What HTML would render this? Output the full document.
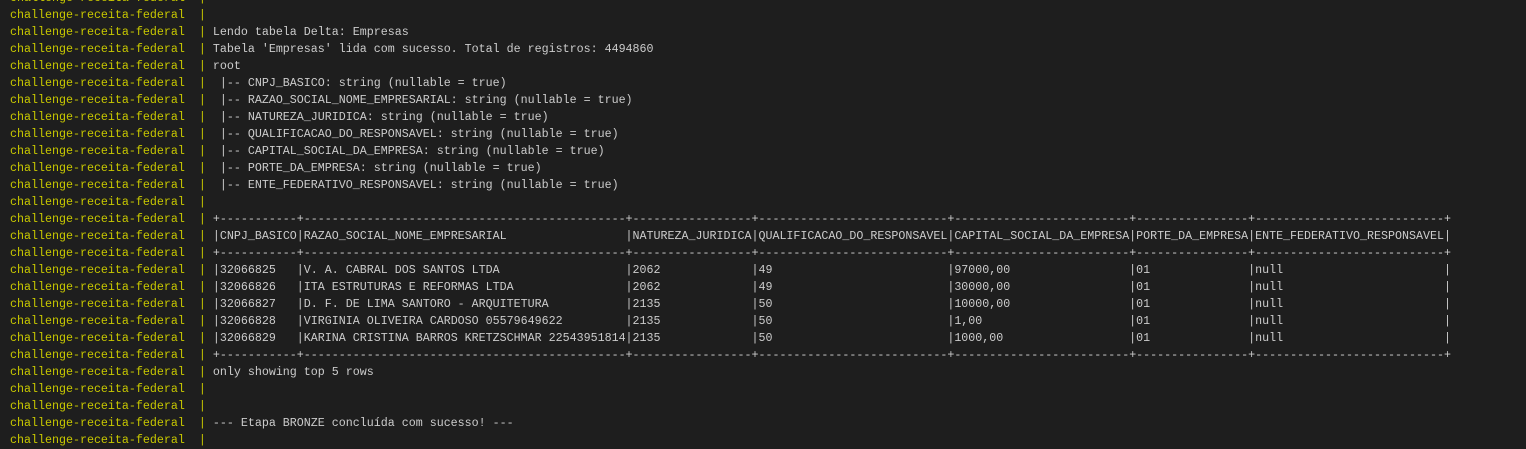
<!DOCTYPE html>
<html><head><meta charset="utf-8"><style>
html,body{margin:0;padding:0;background:#1e1e1e;width:1526px;height:442px;overflow:hidden}
.t{position:absolute;left:10px;top:-10px;font-family:"Liberation Mono",monospace;font-size:11.67px;line-height:17px;color:#cccccc}
.l{height:17px;white-space:pre}
.p{color:#c8c800}
.c{display:inline-block;width:11ch}.r{display:inline-block;width:46ch}.n{display:inline-block;width:17ch}.q{display:inline-block;width:27ch}.k{display:inline-block;width:25ch}.o{display:inline-block;width:16ch}
</style></head><body><div class="t">
<div class="l"><span class="p">challenge-receita-federal  | </span></div>
<div class="l"><span class="p">challenge-receita-federal  | </span></div>
<div class="l"><span class="p">challenge-receita-federal  | </span>Lendo tabela Delta: Empresas</div>
<div class="l"><span class="p">challenge-receita-federal  | </span>Tabela 'Empresas' lida com sucesso. Total de registros: 4494860</div>
<div class="l"><span class="p">challenge-receita-federal  | </span>root</div>
<div class="l"><span class="p">challenge-receita-federal  | </span> |-- CNPJ_BASICO: string (nullable = true)</div>
<div class="l"><span class="p">challenge-receita-federal  | </span> |-- RAZAO_SOCIAL_NOME_EMPRESARIAL: string (nullable = true)</div>
<div class="l"><span class="p">challenge-receita-federal  | </span> |-- NATUREZA_JURIDICA: string (nullable = true)</div>
<div class="l"><span class="p">challenge-receita-federal  | </span> |-- QUALIFICACAO_DO_RESPONSAVEL: string (nullable = true)</div>
<div class="l"><span class="p">challenge-receita-federal  | </span> |-- CAPITAL_SOCIAL_DA_EMPRESA: string (nullable = true)</div>
<div class="l"><span class="p">challenge-receita-federal  | </span> |-- PORTE_DA_EMPRESA: string (nullable = true)</div>
<div class="l"><span class="p">challenge-receita-federal  | </span> |-- ENTE_FEDERATIVO_RESPONSAVEL: string (nullable = true)</div>
<div class="l"><span class="p">challenge-receita-federal  | </span></div>
<div class="l"><span class="p">challenge-receita-federal  | </span>+-----------+----------------------------------------------+-----------------+---------------------------+-------------------------+----------------+---------------------------+</div>
<div class="l"><span class="p">challenge-receita-federal  | </span>|<span class="c">CNPJ_BASICO</span>|<span class="r">RAZAO_SOCIAL_NOME_EMPRESARIAL</span>|<span class="n">NATUREZA_JURIDICA</span>|<span class="q">QUALIFICACAO_DO_RESPONSAVEL</span>|<span class="k">CAPITAL_SOCIAL_DA_EMPRESA</span>|<span class="o">PORTE_DA_EMPRESA</span>|<span class="q">ENTE_FEDERATIVO_RESPONSAVEL</span>|</div>
<div class="l"><span class="p">challenge-receita-federal  | </span>+-----------+----------------------------------------------+-----------------+---------------------------+-------------------------+----------------+---------------------------+</div>
<div class="l"><span class="p">challenge-receita-federal  | </span>|<span class="c">32066825</span>|<span class="r">V. A. CABRAL DOS SANTOS LTDA</span>|<span class="n">2062</span>|<span class="q">49</span>|<span class="k">97000,00</span>|<span class="o">01</span>|<span class="q">null</span>|</div>
<div class="l"><span class="p">challenge-receita-federal  | </span>|<span class="c">32066826</span>|<span class="r">ITA ESTRUTURAS E REFORMAS LTDA</span>|<span class="n">2062</span>|<span class="q">49</span>|<span class="k">30000,00</span>|<span class="o">01</span>|<span class="q">null</span>|</div>
<div class="l"><span class="p">challenge-receita-federal  | </span>|<span class="c">32066827</span>|<span class="r">D. F. DE LIMA SANTORO - ARQUITETURA</span>|<span class="n">2135</span>|<span class="q">50</span>|<span class="k">10000,00</span>|<span class="o">01</span>|<span class="q">null</span>|</div>
<div class="l"><span class="p">challenge-receita-federal  | </span>|<span class="c">32066828</span>|<span class="r">VIRGINIA OLIVEIRA CARDOSO 05579649622</span>|<span class="n">2135</span>|<span class="q">50</span>|<span class="k">1,00</span>|<span class="o">01</span>|<span class="q">null</span>|</div>
<div class="l"><span class="p">challenge-receita-federal  | </span>|<span class="c">32066829</span>|<span class="r">KARINA CRISTINA BARROS KRETZSCHMAR 22543951814</span>|<span class="n">2135</span>|<span class="q">50</span>|<span class="k">1000,00</span>|<span class="o">01</span>|<span class="q">null</span>|</div>
<div class="l"><span class="p">challenge-receita-federal  | </span>+-----------+----------------------------------------------+-----------------+---------------------------+-------------------------+----------------+---------------------------+</div>
<div class="l"><span class="p">challenge-receita-federal  | </span>only showing top 5 rows</div>
<div class="l"><span class="p">challenge-receita-federal  | </span></div>
<div class="l"><span class="p">challenge-receita-federal  | </span></div>
<div class="l"><span class="p">challenge-receita-federal  | </span>--- Etapa BRONZE concluída com sucesso! ---</div>
<div class="l"><span class="p">challenge-receita-federal  | </span></div>
</div></body></html>
